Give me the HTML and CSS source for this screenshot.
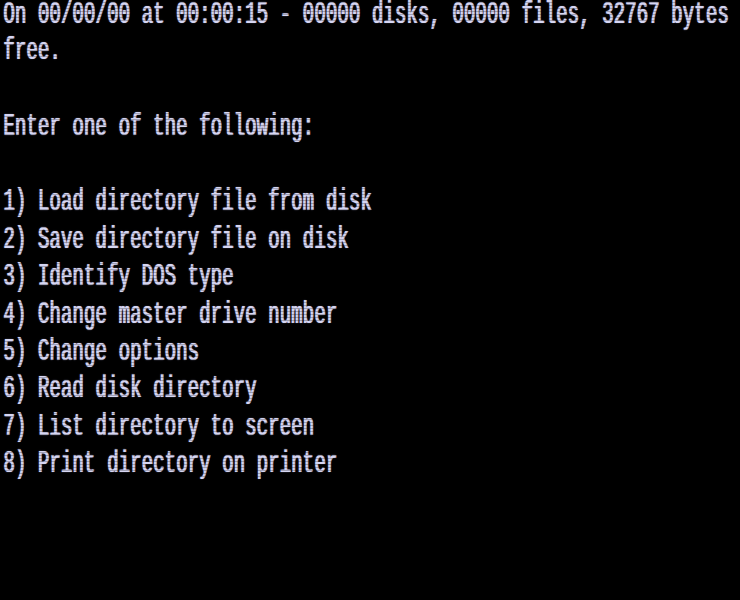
FILE: index.html
```html
<!DOCTYPE html>
<html>
<head>
<meta charset="utf-8">
<link rel="stylesheet" href="styles.css">
</head>
<body>
<div class="screen">
<pre class="text">On 00/00/00 at 00:00:15 - 00000 disks, 00000 files, 32767 bytes
free.

Enter one of the following:

1) Load directory file from disk
2) Save directory file on disk
3) Identify DOS type
4) Change master drive number
5) Change options
6) Read disk directory
7) List directory to screen
8) Print directory on printer</pre>
</div>
</body>
</html>
```
FILE: styles.css
```css
html, body {
  margin: 0;
  padding: 0;
  background: #000;
}
.screen {
  width: 740px;
  height: 600px;
  overflow: hidden;
  position: relative;
  background: #000;
}
.text {
  margin: 0;
  padding: 0 0 0 3px;
  font-family: "Liberation Mono", "DejaVu Sans Mono", monospace;
  font-size: 19.2px;
  line-height: 23.4375px;
  color: #d6d6f2;
  white-space: pre;
  transform-origin: 0 0;
  transform: translateY(-3px) scaleY(1.6);
  text-shadow: 1px 0 0 rgba(214, 214, 242, 0.85), 0 0 1px rgba(200, 200, 255, 0.6);
}
.screen::after {
  content: "";
  position: absolute;
  inset: 0;
  pointer-events: none;
  background: repeating-linear-gradient(to bottom, rgba(0,0,0,0) 0, rgba(0,0,0,0) 2px, rgba(0,0,0,0.25) 2px, rgba(0,0,0,0.25) 3px);
}
```
